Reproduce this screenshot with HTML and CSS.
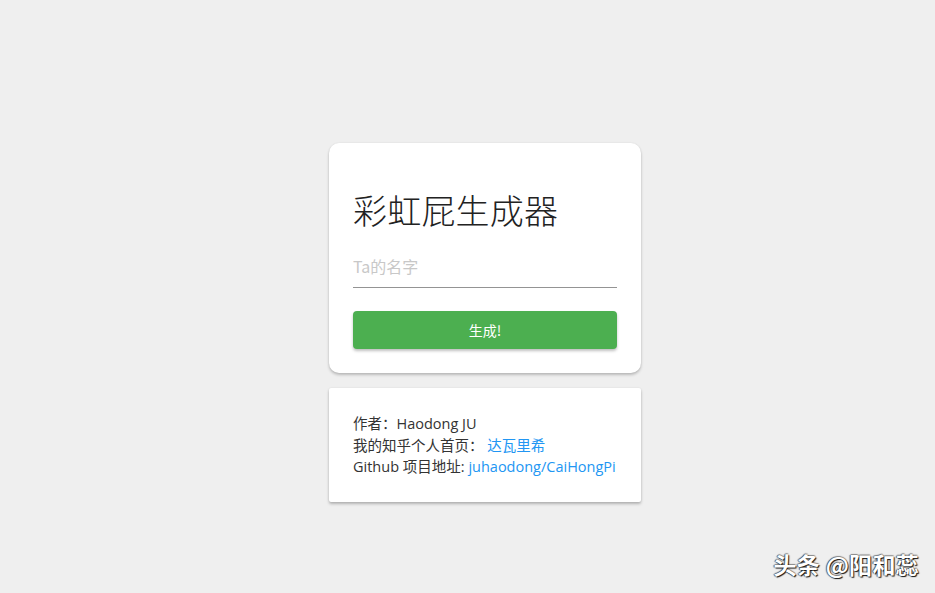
FILE: index.html
```html
<!DOCTYPE html>
<html lang="zh-CN">
<head>
<meta charset="utf-8">
<title>彩虹屁生成器</title>
<link rel="stylesheet" href="styles.css">
</head>
<body>
  <main class="page">
    <section class="card card-main">
      <h1 class="title">彩虹屁生成器</h1>
      <label class="field">
        <input class="field-input" type="text" placeholder="Ta的名字">
      </label>
      <button class="btn-generate" type="button">生成!</button>
    </section>
    <section class="card card-info">
      <p class="info-line">作者：Haodong JU</p>
      <p class="info-line">我的知乎个人首页： <a class="link" href="#">达瓦里希</a></p>
      <p class="info-line">Github 项目地址: <a class="link" href="#">juhaodong/CaiHongPi</a></p>
    </section>
  </main>
  <div class="watermark">头条 @阳和蕊</div>
</body>
</html>
```
FILE: styles.css
```css
* { box-sizing: border-box; }

html, body {
  margin: 0;
  height: 100%;
}

body {
  background: #efefef;
  font-family: "Open Sans", "Noto Sans CJK SC", sans-serif;
  color: #333;
  position: relative;
  overflow: hidden;
}

.page {
  display: flex;
  flex-direction: column;
  align-items: center;
  padding-top: 143px;
  padding-left: 35px;
  gap: 15px;
}

.card {
  width: 312px;
  background: #fff;
}

.card-main {
  border-radius: 10px;
  padding: 44px 24px 24px;
  box-shadow: 0 2px 3px rgba(0, 0, 0, 0.22), 0 0 2px rgba(0, 0, 0, 0.08);
}

.title {
  margin: 0;
  font-family: "Noto Sans CJK SC", sans-serif;
  font-weight: 300;
  font-size: 34px;
  line-height: 46px;
  color: #222;
  letter-spacing: 0.2px;
}

.field {
  display: block;
  margin-top: 20px;
}

.field-input {
  display: block;
  width: 100%;
  border: 0;
  border-bottom: 1px solid #949494;
  outline: none;
  padding: 0 0 9px;
  height: 35px;
  font-family: "Noto Sans CJK SC", sans-serif;
  font-size: 16px;
  color: #333;
  background: transparent;
}

.field-input::placeholder {
  color: #c8c8c8;
}

.btn-generate {
  display: block;
  width: 100%;
  height: 38px;
  margin-top: 23px;
  border: 0;
  border-radius: 4px;
  background: #4caf50;
  color: #fff;
  font-family: "Noto Sans CJK SC", sans-serif;
  font-size: 14px;
  box-shadow: 0 2px 3px rgba(0, 0, 0, 0.25);
  cursor: pointer;
}

.card-info {
  border-radius: 2px;
  padding: 25px 24px 24px;
  box-shadow: 0 2px 3px rgba(0, 0, 0, 0.25), 0 0 2px rgba(0, 0, 0, 0.08);
}

.info-line {
  margin: 0;
  font-size: 14.5px;
  line-height: 21.5px;
  white-space: nowrap;
  color: #333;
}

.link {
  color: #2196f3;
  text-decoration: none;
}

.watermark {
  position: absolute;
  right: 16px;
  bottom: 14px;
  font-family: "Noto Sans CJK SC", sans-serif;
  font-weight: 700;
  font-size: 23px;
  line-height: 30px;
  color: #fff;
  text-shadow: 1px 1px 1px #111, -1px 0 1px rgba(0,0,0,0.6), 0 -1px 1px rgba(0,0,0,0.4);
  letter-spacing: 0.3px;
}
```
